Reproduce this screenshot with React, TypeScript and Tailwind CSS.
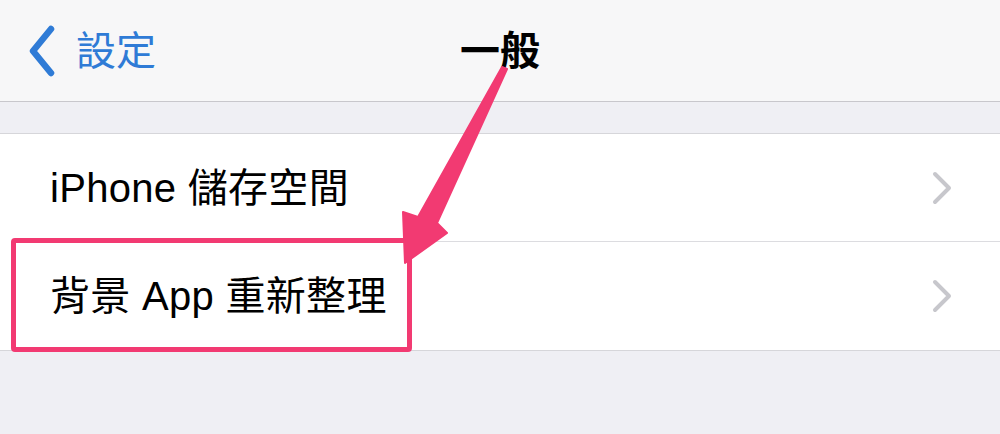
import React from "react";

const font = { fontFamily: '"Liberation Sans", "Noto Sans CJK TC", sans-serif' };

function Chevron() {
  return (
    <svg width="22" height="34" viewBox="0 0 22 34" className="shrink-0">
      <path d="M4 3 L18 17 L4 31" fill="none" stroke="#c7c7cc" strokeWidth="4" strokeLinecap="round" strokeLinejoin="round" />
    </svg>
  );
}

function Row({ label, last }: { label: string; last?: boolean }) {
  return (
    <div className="flex h-[108px] items-stretch bg-white pl-[50px]">
      <div className={`flex flex-1 items-center justify-between pr-[47px] ${last ? "" : "border-b border-[#dcdce0]"}`}>
        <span className="text-[40px] leading-none tracking-[0.3px] text-black" style={font}>{label}</span>
        <Chevron />
      </div>
    </div>
  );
}

export default function App() {
  return (
    <div className="relative h-[434px] w-[1000px] overflow-hidden bg-[#efeff4]" style={font}>
      <div className="relative flex h-[102px] items-center border-b border-[#c8c7cc] bg-[#f7f7f8]">
        <div className="flex items-center pl-[28px] pt-[1px]">
          <svg width="28" height="52" viewBox="0 0 28 52">
            <path d="M23 4 L5 26 L23 48" fill="none" stroke="#2f7bd6" strokeWidth="6.5" strokeLinecap="round" strokeLinejoin="round" />
          </svg>
          <span className="ml-[20px] text-[40px] leading-none text-[#2f7bd6]">設定</span>
        </div>
        <div className="absolute inset-x-0 top-0 flex h-[101px] items-center justify-center">
          <span className="text-[40px] font-bold leading-none text-black">一般</span>
        </div>
      </div>
      <div className="h-[31px]" />
      <div className="border-y border-[#d6d6da]">
        <Row label="iPhone 儲存空間" />
        <Row label="背景 App 重新整理" last />
      </div>

      <div className="absolute left-[11px] top-[238px] h-[114px] w-[401px] rounded-[4px] border-[5px] border-[#f23a72]" />
      <svg className="absolute left-0 top-0" width="1000" height="434" viewBox="0 0 1000 434">
        <polygon
          points="507,69 437,223 447,233 405,263 403,212 418,217 502,67"
          fill="#f23a72"
          stroke="#f23a72"
          strokeWidth="2"
          strokeLinejoin="round"
        />
      </svg>
    </div>
  );
}
